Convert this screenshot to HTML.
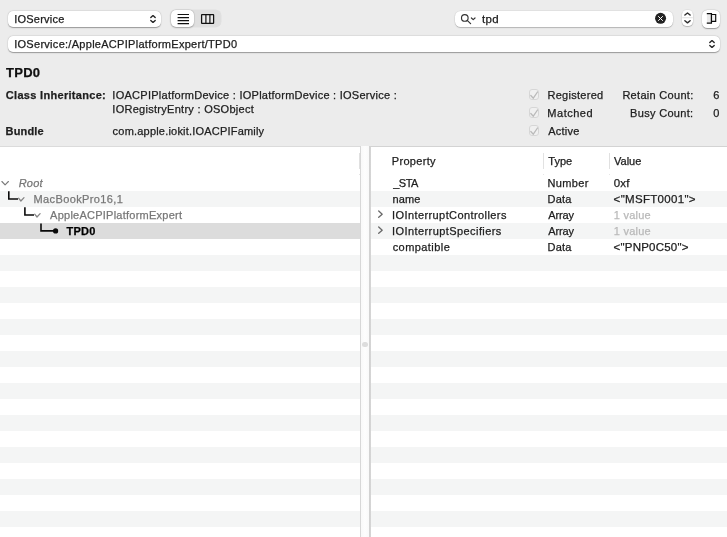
<!DOCTYPE html>
<html>
<head>
<meta charset="utf-8">
<title>IORegistryExplorer</title>
<style>
html,body{margin:0;padding:0;}
body{will-change:transform;width:727px;height:537px;overflow:hidden;background:#ececec;font-family:"Liberation Sans",sans-serif;font-size:11px;color:#202020;position:relative;}
.t{position:absolute;white-space:nowrap;line-height:14px;height:14px;-webkit-text-stroke:0.25px currentColor;}
.b{font-weight:bold;color:#1e1e1e;}
.abs{position:absolute;}
.field{position:absolute;background:#fff;border-radius:5px;box-shadow:0 0 0 0.5px rgba(0,0,0,0.05),0 0.5px 1.2px rgba(0,0,0,0.30),0 1px 0.5px rgba(0,0,0,0.06);}
.pane{position:absolute;background:#fff;overflow:hidden;}
.stripe{position:absolute;left:0;right:0;height:16px;background:#f4f5f5;}
.cb{position:absolute;box-sizing:border-box;width:10.4px;height:11px;border-radius:3px;background:#f0f0f0;border:1px solid #d6d6d6;}
.g{color:#777;}
.v{color:#b9b9b9;}
</style>
</head>
<body>

<!-- toolbar row 1 -->
<div class="field" style="left:8px;top:10.5px;width:153px;height:16px;"></div>
<span class="t" id="t_pop" style="left:14.22px;letter-spacing:0.225px;top:12px;">IOService</span>
<svg class="abs" style="left:149px;top:14px;" width="8" height="10" viewBox="0 0 8 10"><path d="M1.8 3.6 L4 1.6 L6.2 3.6 M1.8 6.4 L4 8.4 L6.2 6.4" fill="none" stroke="#222" stroke-width="1.35" stroke-linecap="round" stroke-linejoin="round"/></svg>

<!-- segmented control -->
<div class="abs" style="left:170.4px;top:10.2px;width:50.7px;height:17.2px;border-radius:5.5px;background:#dfdfdf;box-shadow:0 0 0 0.5px rgba(0,0,0,0.05);"></div>
<div class="abs" style="left:170.6px;top:10.4px;width:23.3px;height:16.6px;border-radius:5px;background:#fff;box-shadow:0 0 0 0.5px rgba(0,0,0,0.06),0 0.5px 1.5px rgba(0,0,0,0.28);"></div>
<svg class="abs" style="left:176px;top:12px;" width="14" height="14" viewBox="0 0 14 14"><path d="M1.6 2.55H13 M1.6 5.6H13 M1.6 8.6H13 M1.6 11.6H13" stroke="#111" stroke-width="1.05" fill="none"/></svg>
<svg class="abs" style="left:199px;top:12px;" width="18" height="14" viewBox="0 0 18 14"><rect x="2.6" y="2.6" width="12" height="8.7" rx="0.4" fill="#ebebeb" stroke="#111" stroke-width="1.25"/><path d="M6.9 2.6V11.3 M10.9 2.6V11.3" stroke="#111" stroke-width="1.2"/></svg>

<!-- search field -->
<div class="field" style="left:454.7px;top:10.5px;width:218.4px;height:16.7px;border-radius:5.5px;"></div>
<svg class="abs" style="left:459px;top:12px;" width="18" height="14" viewBox="0 0 18 14"><circle cx="5.8" cy="5.9" r="3.3" fill="none" stroke="#333" stroke-width="1.15"/><path d="M8.2 8.4 L11.6 11.6" stroke="#333" stroke-width="1.25" stroke-linecap="round"/><path d="M12.4 6 L14.2 7.6 L16 6" fill="none" stroke="#333" stroke-width="1.2" stroke-linecap="round" stroke-linejoin="round"/></svg>
<span class="t" id="t_search" style="left:481.93px;letter-spacing:0.425px;top:12px;font-size:11.5px;">tpd</span>
<svg class="abs" style="left:654px;top:12px;" width="13" height="13" viewBox="0 0 13 13"><circle cx="6.55" cy="6.3" r="5.5" fill="#232323"/><path d="M4.2 4.2 L8.8 8.8 M8.8 4.2 L4.2 8.8" stroke="#fff" stroke-width="1.0"/></svg>

<!-- stepper -->
<div class="field" style="left:681.8px;top:9.6px;width:11.4px;height:16.7px;border-radius:4.5px;"></div>
<svg class="abs" style="left:681px;top:9px;" width="13" height="18" viewBox="0 0 13 18"><path d="M1.2 8.7H11.8" stroke="#e6e6e6" stroke-width="1.2"/><path d="M3.9 6.05 L6.5 4.0 L9.1 6.05 M3.9 11.8 L6.5 13.85 L9.1 11.8" fill="none" stroke="#2e2e2e" stroke-width="1.45" stroke-linecap="round" stroke-linejoin="round"/></svg>

<!-- toggle button -->
<div class="field" style="left:702px;top:10px;width:18.3px;height:17.8px;border-radius:5.5px;"></div>
<svg class="abs" style="left:704px;top:12px;" width="15" height="14" viewBox="0 0 15 14"><rect x="2.9" y="2.2" width="3.6" height="8.4" fill="#e9e9e9"/><rect x="8" y="3" width="3.2" height="5.8" fill="#f0f0f0"/><path d="M2.8 1.6H7.4V11.2H2.8" fill="none" stroke="#0c0c0c" stroke-width="1.3"/><path d="M7.4 2.5H11.7V9.3H7.4" fill="none" stroke="#0c0c0c" stroke-width="1.15"/></svg>

<!-- path combo -->
<div class="field" style="left:8px;top:35.6px;width:712.2px;height:16.4px;"></div>
<span class="t" id="t_path" style="left:14.20px;letter-spacing:0.283px;top:37px;">IOService:/AppleACPIPlatformExpert/TPD0</span>
<svg class="abs" style="left:708px;top:39px;" width="8" height="10" viewBox="0 0 8 10"><path d="M1.8 3.6 L4 1.6 L6.2 3.6 M1.8 6.4 L4 8.4 L6.2 6.4" fill="none" stroke="#222" stroke-width="1.35" stroke-linecap="round" stroke-linejoin="round"/></svg>

<!-- info -->
<span class="t b" id="t_title" style="left:6.10px;letter-spacing:0.250px;top:65px;font-size:13px;line-height:16px;height:16px;color:#111;">TPD0</span>
<span class="t b" id="t_ci" style="left:5.82px;letter-spacing:0.306px;top:88px;">Class Inheritance:</span>
<span class="t" id="t_ci1" style="left:112.35px;letter-spacing:0.262px;top:88px;">IOACPIPlatformDevice : IOPlatformDevice : IOService :</span>
<span class="t" id="t_ci2" style="left:112.30px;letter-spacing:0.280px;top:102px;">IORegistryEntry : OSObject</span>
<span class="t b" id="t_bu" style="left:5.58px;letter-spacing:0.140px;top:124px;">Bundle</span>
<span class="t" id="t_bu1" style="left:112.62px;letter-spacing:0.200px;top:124px;">com.apple.iokit.IOACPIFamily</span>

<div class="cb" style="left:529px;top:89.4px;"></div>
<div class="cb" style="left:529px;top:107.4px;"></div>
<div class="cb" style="left:529px;top:125.4px;"></div>
<svg class="abs" style="left:528px;top:89px;" width="13" height="50" viewBox="0 0 13 50"><g fill="none" stroke="#bababa" stroke-width="1.3" stroke-linecap="round" stroke-linejoin="round"><path d="M2.8 6.5 L5.3 9.2 L9.5 3"/><path d="M2.8 24.5 L5.3 27.2 L9.5 21"/><path d="M2.8 42.5 L5.3 45.2 L9.5 39"/></g></svg>
<span class="t" id="t_reg" style="left:547.40px;letter-spacing:0.294px;top:88px;">Registered</span>
<span class="t" id="t_mat" style="left:547.35px;letter-spacing:0.508px;top:106px;">Matched</span>
<span class="t" id="t_act" style="left:548.17px;letter-spacing:0.240px;top:124px;">Active</span>
<span class="t" id="t_rc" style="left:622.38px;letter-spacing:0.300px;top:88px;">Retain Count:</span>
<span class="t" id="t_bc" style="left:630.10px;letter-spacing:0.315px;top:106px;">Busy Count:</span>
<span class="t" id="t_rc1" style="left:713.23px;letter-spacing:0.000px;top:88px;">6</span>
<span class="t" id="t_bc1" style="left:713.35px;letter-spacing:0.000px;top:106px;">0</span>

<!-- panes -->
<div class="pane" id="lp" style="left:0;top:146px;width:360px;height:391px;">
  <div class="stripe" style="top:45px;"></div>
  <div class="stripe" style="top:77px;background:#dcdcdc;"></div>
  <div class="stripe" style="top:109px;"></div>
  <div class="stripe" style="top:141px;"></div>
  <div class="stripe" style="top:173px;"></div>
  <div class="stripe" style="top:205px;"></div>
  <div class="stripe" style="top:237px;"></div>
  <div class="stripe" style="top:269px;"></div>
  <div class="stripe" style="top:301px;"></div>
  <div class="stripe" style="top:333px;"></div>
  <div class="stripe" style="top:365px;"></div>
  <div class="abs" style="left:359px;top:7px;width:1px;height:15.7px;background:#e0e0e0;"></div><div class="abs" style="left:359px;top:28px;width:1px;height:1px;background:#e4e4e4;"></div>
</div>
<!-- splitter -->
<div class="abs" style="left:360px;top:145.8px;width:11.1px;height:392px;background:linear-gradient(90deg,#d6d6d6 0,#d8d8d8 0.9px,#f9f9f9 1.3px,#fdfdfd 5px,#f9f9f9 9.1px,#d2d2d2 9.5px,#d6d6d6 11.1px);"></div>
<div class="abs" style="left:362px;top:341.6px;width:5.8px;height:5.8px;border-radius:3px;background:#dddddd;"></div>
<div class="pane" id="rp" style="left:371px;top:146px;width:356px;height:391px;">
  <div class="stripe" style="top:45px;"></div>
  <div class="stripe" style="top:77px;"></div>
  <div class="stripe" style="top:109px;"></div>
  <div class="stripe" style="top:141px;"></div>
  <div class="stripe" style="top:173px;"></div>
  <div class="stripe" style="top:205px;"></div>
  <div class="stripe" style="top:237px;"></div>
  <div class="stripe" style="top:269px;"></div>
  <div class="stripe" style="top:301px;"></div>
  <div class="stripe" style="top:333px;"></div>
  <div class="stripe" style="top:365px;"></div>
</div>
<div class="abs" style="left:0;top:145.7px;width:360px;height:1px;background:#dbdbdb;"></div>
<div class="abs" style="left:370.3px;top:145.7px;width:357px;height:1.1px;background:#d3d3d3;"></div>
<div class="abs" style="left:543px;top:153px;width:1px;height:15.7px;background:#e2e2e2;"></div><div class="abs" style="left:543px;top:174px;width:1px;height:1px;background:#e6e6e6;"></div>
<div class="abs" style="left:609.2px;top:153px;width:1px;height:15.7px;background:#e0e0e0;"></div><div class="abs" style="left:609.2px;top:174px;width:1px;height:1px;background:#e6e6e6;"></div>

<!-- tree -->
<svg class="abs" style="left:0;top:175px;" width="70" height="64" viewBox="0 0 70 64">
  <path d="M1.9 6.5 L5.1 9.9 L8.4 6.5" fill="none" stroke="#7a7a7a" stroke-width="1.1" stroke-linecap="round" stroke-linejoin="round"/>
  <g fill="none" stroke="#0a0a0a" stroke-width="1.6">
    <path d="M8.8 16.2 V24 H18"/>
    <path d="M24.9 32.2 V40 H34"/>
    <path d="M41 48.4 V55.9 H54"/>
  </g>
  <circle cx="55.6" cy="55.9" r="2.6" fill="#0a0a0a"/>
  <g fill="none" stroke="#858585" stroke-width="1.25" stroke-linecap="round" stroke-linejoin="round">
    <path d="M18.6 23.2 L20.9 26 L24 22.6"/>
    <path d="M34.7 39.2 L37 42 L40.1 38.6"/>
  </g>
</svg>
<span class="t g" id="t_root" style="left:18.75px;letter-spacing:0.167px;top:176px;font-style:italic;">Root</span>
<span class="t g" id="t_mbp" style="left:33.47px;letter-spacing:0.388px;top:192px;">MacBookPro16,1</span>
<span class="t g" id="t_acpi" style="left:50.10px;letter-spacing:0.241px;top:208px;">AppleACPIPlatformExpert</span>
<span class="t b" id="t_tpd" style="left:66.50px;letter-spacing:0.250px;top:224px;color:#000;">TPD0</span>

<!-- property table -->
<span class="t" id="t_hp" style="left:391.75px;letter-spacing:0.314px;top:154px;">Property</span>
<span class="t" id="t_ht" style="left:548.30px;letter-spacing:-0.000px;top:154px;">Type</span>
<span class="t" id="t_hv" style="left:614.05px;letter-spacing:-0.025px;top:154px;">Value</span>

<span class="t" id="t_p1" style="left:393.25px;letter-spacing:-0.500px;top:176px;">_STA</span>
<span class="t" id="t_p2" style="left:392.55px;letter-spacing:0.117px;top:192px;">name</span>
<span class="t" id="t_p3" style="left:391.98px;letter-spacing:0.414px;top:208px;">IOInterruptControllers</span>
<span class="t" id="t_p4" style="left:392.00px;letter-spacing:0.425px;top:224px;">IOInterruptSpecifiers</span>
<span class="t" id="t_p5" style="left:392.70px;letter-spacing:0.433px;top:240px;">compatible</span>

<span class="t" id="t_y1" style="left:547.55px;letter-spacing:0.350px;top:176px;">Number</span>
<span class="t" id="t_y2" style="left:547.55px;letter-spacing:0.167px;top:192px;">Data</span>
<span class="t" id="t_y3" style="left:548.20px;letter-spacing:-0.113px;top:208px;">Array</span>
<span class="t" id="t_y4" style="left:548.20px;letter-spacing:-0.113px;top:224px;">Array</span>
<span class="t" id="t_y5" style="left:547.55px;letter-spacing:0.167px;top:240px;">Data</span>

<span class="t" id="t_v1" style="left:613.85px;letter-spacing:0.125px;top:176px;font-size:11.5px;">0xf</span>
<span class="t" id="t_v2" style="left:613.60px;letter-spacing:0.318px;top:192px;font-size:11.5px;">&lt;"MSFT0001"&gt;</span>
<span class="t v" id="t_v3" style="left:613.75px;letter-spacing:0.250px;top:208px;">1 value</span>
<span class="t v" id="t_v4" style="left:613.75px;letter-spacing:0.250px;top:224px;">1 value</span>
<span class="t" id="t_v5" style="left:613.55px;letter-spacing:0.215px;top:240px;font-size:11.5px;">&lt;"PNP0C50"&gt;</span>

<svg class="abs" style="left:376px;top:207px;" width="10" height="32" viewBox="0 0 10 32"><g fill="none" stroke="#6a6a6a" stroke-width="1.3" stroke-linecap="round" stroke-linejoin="round"><path d="M2.7 4 L6.2 7.15 L2.7 10.3"/><path d="M2.7 20 L6.2 23.15 L2.7 26.3"/></g></svg>

</body>
</html>
